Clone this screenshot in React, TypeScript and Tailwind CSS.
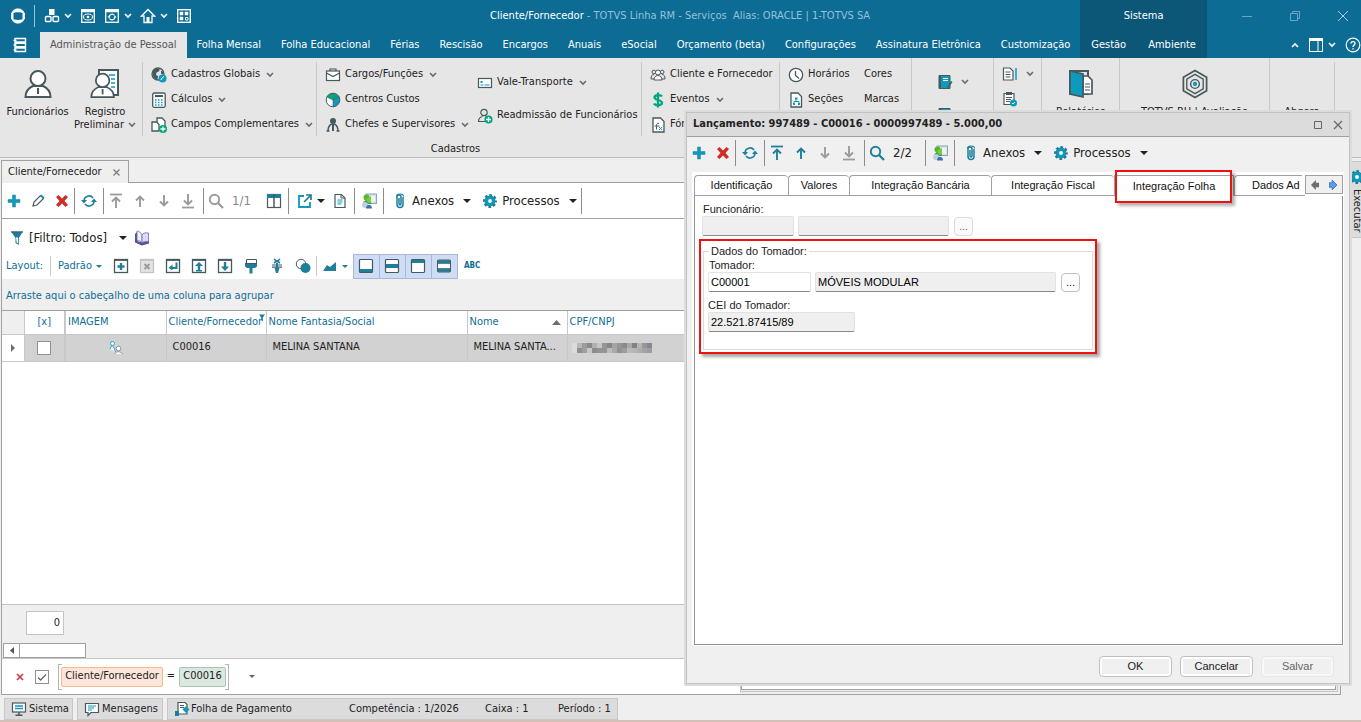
import type { ReactNode } from 'react';

type IconProps = { size?: number; className?: string; children: ReactNode };

// every small glyph is drawn on a 16x16 grid
function Icon({ size = 16, className = '', children }: IconProps) {
  return (
    <svg width={size} height={size} viewBox="0 0 16 16" fill="none" className={`shrink-0 ${className}`} aria-hidden="true">
      {children}
    </svg>
  );
}

const DARK = '#48595e';
const BLUE = '#0c9abe';
const TEAL = '#1d7f9c';
const GREEN = '#00a77e';
const GRAY = '#9b9b9b';

const Chevron = ({ color = '#6a6a6a' }: { color?: string }) => (
  <svg width="8" height="6" viewBox="0 0 8 6" fill="none" className="shrink-0" aria-hidden="true">
    <path d="M1 1l3 3 3-3" stroke={color} strokeWidth="1.6" />
  </svg>
);

const Caret = ({ color = '#222' }: { color?: string }) => (
  <svg width="8" height="4" viewBox="0 0 8 4" className="shrink-0" aria-hidden="true">
    <path d="M0 0h8L4 4z" fill={color} />
  </svg>
);

const SmallCaret = ({ color = TEAL }: { color?: string }) => (
  <svg width="6" height="3" viewBox="0 0 6 3" className="shrink-0" aria-hidden="true">
    <path d="M0 0h6L3 3z" fill={color} />
  </svg>
);

/* ---------- toolbar icons ---------- */

const PlusIcon = () => (
  <Icon><path d="M6.500 2h3v4.500H14v3H9.500V14h-3V9.500H2v-3h4.500z" fill={BLUE} stroke={TEAL} strokeWidth=".5" /></Icon>
);
const PencilIcon = () => (
  <Icon><path d="M3 13l1-4 6.500-6.500 3 3L7 12z" stroke={DARK} strokeWidth="1.2" /><path d="M10 2.500l1.500-1 3 3-1.200 1.300z" fill={BLUE} /></Icon>
);
const DeleteIcon = () => (
  <Icon><path d="M2 4l2.500-2L8 5.500 11.500 2 14 4l-3.500 4 3.500 4-2.500 2L8 10.500 4.500 14 2 12l3.500-4z" fill="#cc2f28" /></Icon>
);
const RefreshIcon = () => (
  <Icon>
    <path d="M3 7.500a5 5 0 019-2.500M13 8.500a5 5 0 01-9 2.500" stroke={TEAL} strokeWidth="1.600" />
    <path d="M0 7h6l-3 3.500zM10 9h6l-3-3.500z" fill={TEAL} />
  </Icon>
);
const ArrowIcon = ({ dir, bar = false, color }: { dir: 'up' | 'down'; bar?: boolean; color: string }) => (
  <Icon className={dir === 'down' ? 'rotate-180' : ''}>
    {bar && <path d="M2 1.500h12" stroke={color} strokeWidth="1.800" />}
    <path d={bar ? 'M8 15V5M4 8.500l4-4 4 4' : 'M8 14V4M4 7.500l4-4 4 4'} stroke={color} strokeWidth="1.900" />
  </Icon>
);
const SearchIcon = ({ color }: { color: string }) => (
  <Icon><circle cx="6.500" cy="6.500" r="4.700" stroke={color} strokeWidth="1.900" /><path d="M10 10l5 5" stroke={color} strokeWidth="2.300" /></Icon>
);
const ColumnsIcon = () => (
  <Icon><rect x="1.500" y="1.500" width="13" height="13" stroke={DARK} strokeWidth="1.200" /><path d="M1 1h14v4H1z" fill={TEAL} /><path d="M8 1v14" stroke={DARK} strokeWidth="1.500" /></Icon>
);
const ExportIcon = () => (
  <Icon><path d="M7 3H2v11h11V9" stroke={BLUE} strokeWidth="1.800" /><path d="M9 2h5v5M14 2L7 9" stroke={TEAL} strokeWidth="1.700" /></Icon>
);
const DocIcon = () => (
  <Icon><path d="M3 1.500h6.500L13 5v9.500H3z" fill="#fff" stroke={DARK} strokeWidth="1.200" /><path d="M9 1.500V5h4" stroke={DARK} /><path d="M5.500 7h5M5.500 9h5M5.500 11h4" stroke={BLUE} /></Icon>
);
const PeopleScreenIcon = () => (
  <Icon>
    <rect x="5" y="1" width="10.500" height="9.500" fill="#cfe4f2" stroke="#8aa4c0" />
    <path d="M8 3h6v5.500H8z" fill="#f3f8dc" />
    <circle cx="5.500" cy="4.500" r="3" fill="#58b62c" />
    <path d="M2 11c0-5 8-5 8 0z" fill="#3aa12b" />
    <path d="M5 6l5-3v6l-3 1z" fill="#79c94a" />
    <circle cx="4" cy="12" r="3" fill="#bfcde0" />
    <path d="M5 15.500c0-5 6-5 6 0z" fill="#3b6fb5" />
  </Icon>
);
const ClipIcon = () => (
  <Icon><path d="M11 4v7.500a3 3 0 01-6 0V4a2 2 0 014 0v7a1 1 0 01-2 0V5" stroke={TEAL} strokeWidth="1.500" /><path d="M4.500 3.500a3.500 2.500 0 017 0" stroke={TEAL} strokeWidth="1.200" /></Icon>
);
const GearIcon = () => (
  <Icon>
    <circle cx="8" cy="8" r="5.700" stroke={TEAL} strokeWidth="2.600" strokeDasharray="2.600 1.877" strokeDashoffset="1.300" />
    <circle cx="8" cy="8" r="5" fill={BLUE} stroke={TEAL} />
    <circle cx="8" cy="8" r="1.900" fill="#fff" />
  </Icon>
);
const FunnelIcon = () => (
  <Icon><path d="M2 1.500h12L9.800 8v7L6.500 13V8z" fill={TEAL} /><path d="M7 7.500h2v5.800l-1.300-.8z" fill="#fff" /><path d="M2 2h12" stroke={DARK} /></Icon>
);
const BookIcon = () => (
  <Icon>
    <path d="M1 4l2-2v9l5 1.500 7-1.500v2.500L8 15.500l-7-3z" fill="#56548f" />
    <path d="M3 1c2 0 4 1.500 5 4v8c-1-2-3-2.500-5-2.500z" fill="#eef0ff" stroke="#6d6ab0" strokeWidth=".8" />
    <path d="M8 5c1-2 3-2.500 6.500-2v8.500c-3-.5-5.500 0-6.500 1.500z" fill="#d9dcf7" stroke="#6d6ab0" strokeWidth=".8" />
  </Icon>
);

/* ---------- layout row icons ---------- */

const Boxed = ({ disabled = false, children }: { disabled?: boolean; children: ReactNode }) => (
  <Icon>
    <rect x="1.500" y="1.500" width="13" height="13" fill={disabled ? '#e3e3e3' : '#fff'} stroke={disabled ? '#c4c4c4' : DARK} strokeWidth="1.300" />
    <path d="M1 2h14" stroke={disabled ? '#c4c4c4' : DARK} strokeWidth="1.800" />
    {children}
  </Icon>
);

const layoutIcons: { name: string; icon: ReactNode }[] = [
  { name: 'Novo layout', icon: <Boxed><path d="M8 5v7M4.500 8.500h7" stroke={TEAL} strokeWidth="2.400" /></Boxed> },
  { name: 'Excluir layout', icon: <Boxed disabled><path d="M5.500 6l5 5M10.500 6l-5 5" stroke="#9a9a9a" strokeWidth="2" /></Boxed> },
  { name: 'Restaurar layout', icon: <Boxed><path d="M11.500 4.500V10H6" stroke={TEAL} strokeWidth="2" /><path d="M7.500 6.500v6L3.500 9.800z" fill={TEAL} /></Boxed> },
  { name: 'Exportar layout', icon: <Boxed><path d="M8 13V7" stroke={TEAL} strokeWidth="2.400" /><path d="M4 8l4-4 4 4zM5 12h6v1.500H5z" fill={TEAL} /></Boxed> },
  { name: 'Importar layout', icon: <Boxed><path d="M8 4v6" stroke={TEAL} strokeWidth="2.400" /><path d="M4 8.500L8 13l4-4.500z" fill={TEAL} /></Boxed> },
  { name: 'Pincel', icon: <Icon><path d="M3.500 1.500h10v4h-10z" fill="#fff" stroke={DARK} /><path d="M2 5h12v3.500L12 10H9.500v5.500h-3V10H4L2 8.500z" fill={TEAL} /><path d="M2 5.500h12" stroke={DARK} /></Icon> },
  { name: 'Ajustar colunas', icon: <Icon><path d="M5 1l3 2.500L11 1M5 5l3-2 3 2" stroke={TEAL} strokeWidth="1.600" /><path d="M3 7h10M3 9.200h10" stroke={DARK} strokeWidth="1.200" /><path d="M8 5v5" stroke={TEAL} strokeWidth="2" /><path d="M5.500 10h5L9 15H7z" fill={TEAL} /></Icon> },
  { name: 'Formatação condicional', icon: <Icon><circle cx="6" cy="6" r="4.700" fill="#fff" stroke={DARK} /><circle cx="10.500" cy="10" r="5" fill={TEAL} /></Icon> },
];

const panels = [
  { name: 'Rodapé', icon: <Icon><rect x="1.500" y="1.500" width="13" height="13" rx="1" fill="#fff" stroke={DARK} strokeWidth="1.200" /><path d="M2 11h12v3H2z" fill={TEAL} /></Icon> },
  { name: 'Rodapé de grupo', icon: <Icon><rect x="1.500" y="1.500" width="13" height="13" rx="1" fill="#fff" stroke={DARK} strokeWidth="1.200" /><path d="M2 6h12v4H2z" fill={TEAL} /></Icon> },
  { name: 'Cabeçalho', icon: <Icon><rect x="1.500" y="1.500" width="13" height="13" rx="1" fill="#fff" stroke={DARK} strokeWidth="1.200" /><path d="M2 2h12v3H2z" fill={TEAL} /></Icon> },
  { name: 'Linhas', icon: <Icon><rect x="1.500" y="2" width="13" height="12" rx="1" fill="#fff" stroke={DARK} /><path d="M1.500 2.500h13v3h-13zM1.500 10.500h13v3h-13z" fill={TEAL} stroke={DARK} strokeWidth=".6" /></Icon> },
];

/* ---------- ribbon ---------- */

const ribbonIcons: Record<string, ReactNode> = {
  globe: <Icon><circle cx="7" cy="7" r="6" fill="#e6e6e6" stroke={DARK} strokeWidth="1.300" /><path d="M1.500 6C2 3 4.500 1 7.500 1.500L9 3 7 5 5.500 5.500 5 8l2 1-.500 3.500C3.500 12.500 1.500 9.500 1.500 6z" fill={DARK} /><path d="M10 3.500L12.500 5 12 8 10 6.500z" fill={DARK} /><circle cx="11.500" cy="11.500" r="4" fill={BLUE} /><path d="M10 13l.5-1.500L13 9.500" stroke="#fff" /></Icon>,
  calc: <Icon><rect x="1.700" y="1" width="12.500" height="14.300" rx="1.500" fill="#fff" stroke={DARK} strokeWidth="1.300" /><path d="M4 3h8v2H4z" fill={DARK} /><path d="M4 8h1.500M7 8h1.500M10 8h1.500M4 10.500h1.500M7 10.500h1.500M10 10.500h1.500M4 13h1.500M7 13h1.500M10 13h1.500" stroke={BLUE} strokeWidth="1.500" /></Icon>,
  fields: <Icon><path d="M6 5V1h5l3 3v7H9" fill="#fff" stroke={DARK} strokeWidth="1.300" /><path d="M1 5h4.500L8 7.500V14H1z" fill="#fff" stroke={DARK} strokeWidth="1.300" /><circle cx="12" cy="12" r="4" fill={GREEN} /><path d="M12 9.500v5M9.500 12h5" stroke="#fff" strokeWidth="1.300" /></Icon>,
  bag: <Icon><path d="M5 4V2h6v2" stroke={DARK} strokeWidth="1.200" /><rect x="1.500" y="4" width="13" height="9.500" fill="#fff" stroke={DARK} strokeWidth="1.200" /><path d="M1.500 6L8 9.500 14.500 6" stroke={DARK} strokeWidth="1.200" /></Icon>,
  pie: <Icon><circle cx="8" cy="8" r="6.800" fill="#fff" stroke={DARK} /><path d="M8 8L1.800 5C4 .5 12 .5 14.200 5z" fill={GREEN} stroke={DARK} strokeWidth=".6" /><path d="M8 8l6.200-3c1.500 4-1 9-6.200 9.800z" fill={BLUE} stroke={DARK} strokeWidth=".6" /></Icon>,
  chief: <Icon><circle cx="8" cy="4" r="3" fill={DARK} /><path d="M7 7h2v7H7z" fill={DARK} /><path d="M7 7c-3 1-4 4-4 7M9 7c3 1 4 4 4 7M1.500 14h3M11.500 14h3" stroke={DARK} strokeWidth="1.500" /></Icon>,
  card: <Icon><rect x="1.500" y="3.500" width="13" height="9" fill="#fff" stroke={DARK} strokeWidth="1.200" /><path d="M3.500 6h2v2h-2z" fill={BLUE} /><path d="M3.500 10h3M7.500 10h5" stroke={BLUE} /></Icon>,
  personAdd: <Icon><circle cx="7" cy="4.500" r="3.200" stroke={DARK} strokeWidth="1.200" /><path d="M8 13.500H1.500c0-3 2-4.500 4-5M8.500 8.500l2 .5" stroke={DARK} strokeWidth="1.200" /><circle cx="11.500" cy="11.500" r="4" fill={GREEN} /><path d="M11.500 9v5M9 11.500h5" stroke="#fff" strokeWidth="1.300" /></Icon>,
  people: <Icon><circle cx="3.800" cy="5" r="1.800" stroke={DARK} /><circle cx="12.200" cy="5" r="1.800" stroke={DARK} /><path d="M4 12H1c0-3 1-4.500 3-4.500M12 12h3c0-3-1-4.500-3-4.500" stroke={DARK} /><path d="M4 13c0-6 8-6 8 0z" fill="#fff" stroke={DARK} /><circle cx="8" cy="5.500" r="2.500" fill="#fff" stroke={DARK} /></Icon>,
  money: <Icon><path d="M12 4.500C11 2.800 4.500 2.500 4.500 5.500S12 7.500 12 10.800 5 13.500 4 11.500M8 .5v15" stroke={GREEN} strokeWidth="2.300" /></Icon>,
  formula: <Icon><path d="M3 1h7.500L14 4.500V15H3z" fill="#fff" stroke={DARK} strokeWidth="1.300" /><path d="M9 6.500c-3-1-2.500 2-2.500 6M4.500 9h5" stroke={DARK} /><path d="M9 10l3 3M12 10l-3 3" stroke={BLUE} /></Icon>,
  clock: <Icon><circle cx="8" cy="8" r="6.700" fill="#fff" stroke={DARK} strokeWidth="1.300" /><path d="M7.500 4v4.500l3.500 3" stroke={DARK} strokeWidth="1.300" /></Icon>,
  section: <Icon><path d="M3 1h7L13.500 4.500V15H3z" fill="#fff" stroke={DARK} strokeWidth="1.300" /><path d="M7 5.500h2.500v2H7zM5 11h2v2H5zM10 11h2v2h-2z" fill={BLUE} /><path d="M8 7v2.500M6 11V9.500h5V11" stroke={BLUE} /></Icon>,
};

function RibbonItem({ icon, label, menu = false }: { icon?: string; label: string; menu?: boolean }) {
  return (
    <button className="flex h-[25px] shrink-0 items-center gap-1 whitespace-nowrap">
      {icon && ribbonIcons[icon]}
      <span>{label}</span>
      {menu && <span className="pl-[2px]"><Chevron /></span>}
    </button>
  );
}

const Person = () => (
  <g stroke={DARK} strokeWidth="2" fill="#fff">
    <path d="M1.500 29c0-6 3-9 7.500-11h10c4.500 2 7.500 5 7.500 11z" />
    <circle cx="14" cy="10.500" r="7.500" />
    <path d="M14 20v6" />
  </g>
);

function Ribbon() {
  return (
    <section className="flex h-[100px] shrink-0 overflow-hidden border-b border-[#bdbdbd] bg-[#e6e6e6]">
      <div className="flex w-[912px] shrink-0 flex-col border-r border-[#c8c8c8] pt-1">
        <div className="flex h-[74px]">
          <div className="flex w-[143px] items-start border-r border-[#c8c8c8] pt-[6px]">
            <button className="flex w-[75px] flex-col items-center">
              <svg width="28" height="32" viewBox="0 0 28 32" aria-hidden="true"><Person /></svg>
              <span className="mt-[5px] leading-[13px]">Funcionários</span>
            </button>
            <button className="flex w-[60px] flex-col items-center">
              <svg width="32" height="32" viewBox="0 0 32 32" aria-hidden="true">
                <path d="M10 2h19v25H10z" fill="#fff" stroke={DARK} strokeWidth="2" />
                <path d="M20 7h6M22 11h4M22 15h4M22 19h4" stroke={BLUE} strokeWidth="1.500" />
                <g transform="translate(1 3) scale(.9)"><Person /></g>
              </svg>
              <span className="mt-[5px] leading-[13px]">Registro</span>
              <span className="flex items-center gap-1 leading-[13px]">Preliminar <Chevron /></span>
            </button>
          </div>
          <div className="flex w-[174px] flex-col border-r border-[#c8c8c8] pl-2">
            <RibbonItem icon="globe" label="Cadastros Globais" menu />
            <RibbonItem icon="calc" label="Cálculos" menu />
            <RibbonItem icon="fields" label="Campos Complementares" menu />
          </div>
          <div className="flex w-[325px] border-r border-[#c8c8c8] pl-2">
            <div className="flex w-[152px] flex-col">
              <RibbonItem icon="bag" label="Cargos/Funções" menu />
              <RibbonItem icon="pie" label="Centros Custos" />
              <RibbonItem icon="chief" label="Chefes e Supervisores" menu />
            </div>
            <div className="flex flex-col gap-2 pt-2">
              <RibbonItem icon="card" label="Vale-Transporte" menu />
              <RibbonItem icon="personAdd" label="Readmissão de Funcionários" />
            </div>
          </div>
          <div className="flex w-[138px] flex-col border-r border-[#c8c8c8] pl-2">
            <RibbonItem icon="people" label="Cliente e Fornecedor" />
            <RibbonItem icon="money" label="Eventos" menu />
            <RibbonItem icon="formula" label="Fór" />
          </div>
          <div className="flex pl-2">
            <div className="flex w-[76px] flex-col">
              <RibbonItem icon="clock" label="Horários" />
              <RibbonItem icon="section" label="Seções" />
            </div>
            <div className="flex flex-col">
              <RibbonItem label="Cores" />
              <RibbonItem label="Marcas" />
            </div>
          </div>
        </div>
        <span className="pt-[5px] text-center leading-[16px]">Cadastros</span>
      </div>
      <div className="flex w-[82px] shrink-0 flex-col items-center gap-[17px] border-r border-[#c8c8c8] pt-4">
        {[0, 1].map((n) => (
          <button key={n} aria-label="Relatório" className="flex items-center gap-2">
            <Icon><path d="M2 1.500h11v13H2z" fill={BLUE} stroke={DARK} /><path d="M2 1.500h2v13H2z" fill={DARK} /><path d="M6 4.500h5M6 6.500h5" stroke="#fff" /><path d="M10 14l4-7 1.500 1-4 6z" fill={DARK} /></Icon>
            <Chevron />
          </button>
        ))}
      </div>
      <div className="flex w-[48px] shrink-0 flex-col items-start gap-[9px] border-r border-[#c8c8c8] pt-2 pl-2">
        <button aria-label="Documentos" className="flex items-center gap-2">
          <Icon><path d="M1.500 2h6.500l3 3v9H1.500z" fill="#fff" stroke={DARK} strokeWidth="1.200" /><path d="M3.500 6h5M3.500 8.500h5M3.500 11h5" stroke={DARK} /><path d="M14 2v12" stroke={BLUE} strokeWidth="1.500" /></Icon>
          <Chevron />
        </button>
        <button aria-label="Tarefas">
          <Icon><path d="M2 2.500h10v11H2z" fill="#fff" stroke={DARK} strokeWidth="1.200" /><path d="M4 1h6v3H4z" fill={DARK} /><path d="M4 6.500h6M4 8.500h5M4 10.500h4" stroke={DARK} /><circle cx="11.500" cy="12" r="3.500" fill={BLUE} /><path d="M10 12l1 1 2-2" stroke="#fff" /></Icon>
        </button>
      </div>
      <button className="flex w-[78px] shrink-0 flex-col items-center border-r border-[#c8c8c8] pt-[11px]">
        <svg width="26" height="30" viewBox="0 0 26 30" aria-hidden="true">
          <path d="M2 2h18v23H2z" fill="#e6e6e6" stroke={DARK} strokeWidth="2" />
          <path d="M15 7h5l4 4v14h-9z" fill="#fff" stroke={DARK} strokeWidth="1.700" />
          <path d="M17 15h5M17 18h5M17 21h5" stroke={DARK} />
          <path d="M2 2l13 3v23L2 25z" fill={BLUE} stroke={DARK} strokeWidth="1.700" />
        </svg>
        <span className="mt-[6px] leading-[14px]">Relatórios</span>
      </button>
      <button className="flex w-[150px] shrink-0 flex-col items-center border-r border-[#c8c8c8] pt-[11px]">
        <svg width="28" height="30" viewBox="0 0 28 31" fill="none" stroke={DARK} aria-hidden="true">
          <path d="M14 1.500l12 7v14l-12 7-12-7v-14z" strokeWidth="1.800" />
          <path d="M14 5.500l8.500 5v10L14 25.500l-8.500-5v-10z" strokeWidth="1.400" />
          <circle cx="14" cy="15.500" r="4.500" strokeWidth="1.500" />
          <circle cx="14" cy="15.500" r="2.200" fill={BLUE} stroke="none" />
        </svg>
        <span className="mt-[6px] leading-[14px]">TOTVS RH | Avaliação</span>
      </button>
      <button className="mt-1 flex h-[74px] w-[65px] shrink-0 items-start justify-center border-r border-[#c8c8c8] pt-[43px] leading-[14px]">Ahgora</button>
    </section>
  );
}

/* ---------- header ---------- */

const tabs = ['Administração de Pessoal', 'Folha Mensal', 'Folha Educacional', 'Férias', 'Rescisão', 'Encargos', 'Anuais', 'eSocial', 'Orçamento (beta)', 'Configurações', 'Assinatura Eletrônica', 'Customização'];

function Header() {
  return (
    <header className="flex h-[58px] shrink-0 overflow-hidden bg-[#0c6c94] text-white">
      <div className="flex shrink-0 flex-col">
        <div className="flex h-8 items-center">
          <div className="flex w-[280px] items-center pl-[10px]">
            <Icon><path d="M1 6C2 2.500 5 .5 8 .5S14 2.500 15 6C11 3.500 5 3.500 1 6zM1 10c1 3.500 4 5.500 7 5.500s6-2 7-5.500c-4 2.500-10 2.500-14 0z" fill="#fff" /><path d="M2.300 5v6M13.700 5v6" stroke="#fff" strokeWidth="2.400" /></Icon>
            <span className="mr-[9px] ml-2 h-[22px] w-px bg-white/60" />
            <div className="flex items-center gap-2">
              <button aria-label="Módulos" className="flex items-center gap-1">
                <Icon><path d="M5 1h5.500v6H5z" fill="#fff" /><rect x="1.500" y="8.500" width="5.500" height="5" rx="1" stroke="#fff" strokeWidth="1.400" /><rect x="9" y="8.500" width="5.500" height="5" rx="1" stroke="#fff" strokeWidth="1.400" /></Icon>
                <Chevron color="#fff" />
              </button>
              <button aria-label="Visualizar">
                <Icon><rect x="1.700" y="1.700" width="12.600" height="12.600" stroke="#fff" strokeWidth="1.300" /><path d="M1 3h14" stroke="#fff" strokeWidth="2.500" /><ellipse cx="8" cy="9" rx="4.500" ry="3" stroke="#fff" /><circle cx="8" cy="9" r="1.300" fill="#fff" /></Icon>
              </button>
              <button aria-label="Atualizar" className="flex items-center gap-1">
                <Icon><rect x="1.700" y="1.700" width="12.600" height="12.600" stroke="#fff" strokeWidth="1.300" /><path d="M1 3h14" stroke="#fff" strokeWidth="2.500" /><path d="M5 9a3 3 0 015.500-1.500M11 9a3 3 0 01-5.500 1.500" stroke="#fff" strokeWidth="1.300" /><path d="M3.500 8.500h3l-1.500 2zM9.500 9.500h3L11 7.500z" fill="#fff" /></Icon>
                <Chevron color="#fff" />
              </button>
              <button aria-label="Início" className="flex items-center gap-1">
                <Icon><path d="M1.500 8L8 1.500 14.500 8H12v6.500H4V8z" stroke="#fff" strokeWidth="1.300" /><path d="M6.500 9h3v5.500h-3z" fill="#fff" /></Icon>
                <Chevron color="#fff" />
              </button>
              <button aria-label="Painel">
                <Icon><rect x="1.700" y="1.700" width="12.600" height="12.600" stroke="#fff" strokeWidth="1.400" /><path d="M4 4h3v3H4zM9 4h3v3H9zM4 9h3v3H4z" fill="#fff" stroke="#fff" strokeWidth=".5" /><path d="M9.500 9.500h2.500v2.500H9.500z" stroke="#fff" /></Icon>
              </button>
            </div>
          </div>
          <h1 className="flex-1 text-center whitespace-nowrap text-[#94c1dc]"><span className="text-white">Cliente/Fornecedor</span> - TOTVS Linha RM - Serviços&nbsp; Alias: ORACLE | 1-TOTVS SA</h1>
        </div>
        <nav className="flex h-[26px]">
          <button aria-label="Menu" className="flex w-10 items-center justify-center">
            <Icon><path d="M3 1.500h10.500v3.500H3zM3 6.300h10.500v3.500H3zM3 11h10.500v3.500H3z" stroke="#fff" strokeWidth="1.400" /><path d="M1.500 3.300h3M1.500 8h3M1.500 12.800h3" stroke="#fff" strokeWidth="1.300" /></Icon>
          </button>
          {tabs.map((tab, i) => (
            <a key={tab} href="#" className={`flex items-center px-[10px] whitespace-nowrap ${i === 0 ? 'bg-[#e6e6e6] text-[#555]' : ''}`}>{tab}</a>
          ))}
        </nav>
      </div>
      <div className="flex shrink-0 flex-col bg-[#0c5778]">
        <span className="flex h-8 items-center justify-center">Sistema</span>
        <nav className="flex h-[26px]">
          <a href="#" className="flex items-center px-[11px]">Gestão</a>
          <a href="#" className="flex items-center px-[11px]">Ambiente</a>
        </nav>
      </div>
      <div className="flex flex-1 flex-col items-end">
        <div className="flex h-8 items-center gap-8 pr-[10px] text-[#6ba7c0]">
          <button aria-label="Minimizar"><Icon><path d="M3 8.500h10" stroke="currentColor" /></Icon></button>
          <button aria-label="Restaurar"><Icon><path d="M3.500 5.500h7v7h-7zM5.500 5.500v-2h7v7h-2" stroke="currentColor" /></Icon></button>
          <button aria-label="Fechar"><Icon><path d="M3 3l10 10M13 3L3 13" stroke="#a8cddd" /></Icon></button>
        </div>
        <div className="flex h-[26px] items-center gap-[9px]">
          <span className="rotate-180"><Chevron color="#fff" /></span>
          <button aria-label="Painéis" className="flex items-center gap-1">
            <Icon><path d="M1.500 1.500h13v13h-13z" stroke="#fff" /><path d="M1 1h14v3H1z" fill="#fff" /><path d="M10 2v12" stroke="#fff" /></Icon>
            <Chevron color="#fff" />
          </button>
          <button aria-label="Ajuda">
            <Icon><circle cx="8" cy="8" r="6.800" stroke="#fff" strokeWidth="1.200" /><path d="M6 6.500C6 4 10 4 10 6.500 10 8 8 8 8 10M8 11.200v1.300" stroke="#fff" strokeWidth="1.400" /></Icon>
          </button>
        </div>
      </div>
    </header>
  );
}

/* ---------- list view ---------- */

const Sep = () => <span className="h-[26px] w-px shrink-0 bg-[#8c8c8c]" />;

function Tool({ label, children }: { label: string; children: ReactNode }) {
  return <button aria-label={label} className="flex w-6 shrink-0 justify-center">{children}</button>;
}

function TextMenus() {
  return (
    <>
      <button className="flex items-center gap-1 pl-2 text-[13px]"><ClipIcon />Anexos<span className="pl-[5px]"><Caret /></span></button>
      <button className="flex items-center gap-1 pl-[11px] text-[13px]"><GearIcon />Processos<span className="pl-[5px]"><Caret /></span></button>
    </>
  );
}

// redacted document number
const blurCells = ['#e0dede', '#b4b0b0', '#918d92', '#77777c', '#aaa6a6', '#c4c2c2', '#8a8488', '#737378', '#9b9799', '#88858c', '#79777a', '#a19c9c', '#6e6d72', '#b3adad', '#8b868a', '#777479'];

function ListView() {
  return (
    <div className="flex w-[738px] shrink-0 flex-col bg-white">
      <div className="flex h-9 items-center border-b border-[#a0a0a0]">
        <Tool label="Incluir"><PlusIcon /></Tool>
        <Tool label="Editar"><PencilIcon /></Tool>
        <Tool label="Excluir"><DeleteIcon /></Tool>
        <Sep />
        <span className="px-[2px]"><Tool label="Atualizar"><RefreshIcon /></Tool></span>
        <Sep />
        <Tool label="Primeiro"><ArrowIcon dir="up" bar color={GRAY} /></Tool>
        <Tool label="Anterior"><ArrowIcon dir="up" color={GRAY} /></Tool>
        <Tool label="Próximo"><ArrowIcon dir="down" color={GRAY} /></Tool>
        <Tool label="Último"><ArrowIcon dir="down" bar color={GRAY} /></Tool>
        <span className="flex pl-[3px]"><Sep /></span>
        <Tool label="Localizar"><SearchIcon color={GRAY} /></Tool>
        <span className="w-[34px] pl-1 text-[13px] text-[#888]">1/1</span>
        <Tool label="Colunas"><ColumnsIcon /></Tool>
        <span className="flex pr-1 pl-[2px]"><Sep /></span>
        <Tool label="Exportar"><ExportIcon /></Tool>
        <span className="pr-[3px]"><Caret /></span>
        <Tool label="Documento"><DocIcon /></Tool>
        <span className="flex px-[2px]"><Sep /></span>
        <Tool label="Contatos"><PeopleScreenIcon /></Tool>
        <span className="flex pl-[2px]"><Sep /></span>
        <TextMenus />
        <span className="flex pl-1"><Sep /></span>
      </div>
      <div className="flex h-[34px] items-center gap-1 pt-1 pl-[7px] text-[13px]">
        <FunnelIcon />
        <span>[Filtro: Todos]</span>
        <span className="pr-[3px] pl-2"><Caret /></span>
        <BookIcon />
      </div>
      <div className="flex h-[26px] items-center pl-[4px] text-[#0f6e96]">
        <span>Layout:</span>
        <span className="mx-[7px] h-[20px] w-px bg-[#c8c8c8]" />
        <button className="flex w-[50px] items-center gap-1">Padrão <SmallCaret /></button>
        {layoutIcons.map(({ name, icon }) => (
          <button key={name} aria-label={name} className="flex w-[26px] justify-center">{icon}</button>
        ))}
        <span className="h-[20px] w-px bg-[#c8c8c8]" />
        <button aria-label="Gráfico" className="flex w-9 items-center justify-center gap-1">
          <Icon><path d="M1 13l4-6 3 2 6-5v9z" fill={TEAL} /></Icon>
          <SmallCaret />
        </button>
        <div className="flex border border-r-0 border-[#a9b7d2]">
          {panels.map(({ name, icon }) => (
            <button key={name} aria-label={name} className="flex h-[23px] w-[26px] items-center justify-center border-r border-[#a9b7d2] bg-[#cfdcf5]">{icon}</button>
          ))}
        </div>
        <button className="pl-[6px] text-[8px] font-bold">ABC</button>
      </div>
      <div className="flex h-8 items-center border-b border-[#a0a0a0] bg-[#efefef] pt-[3px] pl-1 text-[#0f6e96]">Arraste aqui o cabeçalho de uma coluna para agrupar</div>
      <table className="w-full table-fixed border-collapse text-left">
        <colgroup>
          <col className="w-[22px]" />
          <col className="w-[41px]" />
          <col className="w-[101px]" />
          <col className="w-[100px]" />
          <col className="w-[201px]" />
          <col className="w-[100px]" />
          <col />
        </colgroup>
        <thead>
          <tr className="h-[23px] text-[#0f6e96]">
            <th className="border-r border-b border-[#c8c8c8] bg-[#efefef]" />
            <th className="border-r-2 border-b border-[#c8c8c8] text-center font-normal">[x]</th>
            <th className="border-r border-b border-[#c8c8c8] pl-[2px] font-normal">IMAGEM</th>
            <th className="border-r border-b border-[#c8c8c8] pl-[2px] font-normal">
              <span className="flex items-start">Cliente/Fornecedor<svg width="6" height="8" viewBox="0 0 7 8" className="-ml-[3px] shrink-0" aria-hidden="true"><path d="M0 0h7L4.500 3.500V8L2.500 6.500v-3z" fill={TEAL} /></svg></span>
            </th>
            <th className="border-r border-b border-[#c8c8c8] pl-[2px] font-normal">Nome Fantasia/Social</th>
            <th className="border-r border-b border-[#c8c8c8] px-[2px] font-normal">
              <span className="flex items-center justify-between pr-1">Nome<svg width="9" height="5" viewBox="0 0 9 5" aria-hidden="true"><path d="M0 5h9L4.500 0z" fill="#6e6e6e" /></svg></span>
            </th>
            <th className="border-b border-[#c8c8c8] pl-[2px] font-normal">CPF/CNPJ</th>
          </tr>
        </thead>
        <tbody>
          <tr className="h-[27px] bg-[#d2d2d2] text-[#222]">
            <td className="border-r border-b border-[#c8c8c8] bg-white">
              <svg width="4" height="8" viewBox="0 0 4 8" className="mx-auto" aria-hidden="true"><path d="M0 0l4 4-4 4z" fill="#6e6e6e" /></svg>
            </td>
            <td className="border-r-2 border-b border-[#c8c8c8] text-center">
              <input type="checkbox" aria-label="Selecionar C00016" className="mx-auto block size-[14px] appearance-none border border-[#909090] bg-white" />
            </td>
            <td className="border-r border-b border-[#c8c8c8]">
              <Icon className="mx-auto"><g fill="#fff" stroke="#2aa5d2"><path d="M2 9l2-4 2 3 1.500 4" /><circle cx="4.500" cy="3.500" r="2" /></g><g fill="#fff" stroke="#8794a0"><circle cx="10.500" cy="8.500" r="2.300" /><path d="M7 14c.5-3 6-3 7.500 0" /></g></Icon>
            </td>
            <td className="border-r border-b border-[#c8c8c8] pl-[6px]">C00016</td>
            <td className="border-r border-b border-[#c8c8c8] pl-[6px]">MELINA SANTANA</td>
            <td className="border-r border-b border-[#c8c8c8] pl-[6px]">MELINA SANTA...</td>
            <td className="border-b border-[#c8c8c8] pl-1">
              <svg width="80" height="10" viewBox="0 0 80 10" aria-label="CPF oculto">
                {blurCells.map((fill, i) => (
                  <g key={i}>
                    <rect x={i * 5} y="0" width="5" height="5" fill={fill} opacity=".8" />
                    <rect x={i * 5} y="5" width="5" height="5" fill={blurCells[(i * 7) % 16]} opacity=".7" />
                  </g>
                ))}
              </svg>
            </td>
          </tr>
        </tbody>
      </table>
      <div className="flex-1" />
      <div className="flex h-[54px] flex-col justify-between border-t border-[#c4c4c4] bg-[#efefef] pt-[6px]">
        <output className="ml-6 flex h-[24px] w-[38px] items-center justify-end border border-[#c4c4c4] bg-white pr-[3px]">0</output>
        <div className="ml-px flex h-[15px]">
          <button aria-label="Rolar para a esquerda" className="flex w-[17px] items-center justify-center border border-[#a0a0a0] bg-white">
            <svg width="4" height="7" viewBox="0 0 4 7" aria-hidden="true"><path d="M4 0v7L0 3.500z" fill="#555" /></svg>
          </button>
          <span className="w-[66px] border border-l-0 border-[#a0a0a0] bg-white" />
        </div>
      </div>
      <div className="flex h-9 items-center border-t border-[#c4c4c4]">
        <button aria-label="Limpar filtro" className="ml-[10px]"><Icon><path d="M5 5l6 6M11 5l-6 6" stroke="#c9384a" strokeWidth="1.600" /></Icon></button>
        <label className="relative ml-[7px] block size-[14px]">
          <input type="checkbox" defaultChecked aria-label="Filtro ativo" className="block size-[14px] appearance-none border border-[#909090] bg-white" />
          <svg width="10" height="10" viewBox="0 0 10 10" fill="none" className="pointer-events-none absolute top-[2px] left-[2px]" aria-hidden="true"><path d="M1 5.500l2.500 2.500L9 2.500" stroke="#666" strokeWidth="1.300" /></svg>
        </label>
        <div className="ml-[9px] flex h-[26px] items-center">
          <span className="-mr-px h-full w-1 border border-r-0 border-[#b4b4b4]" />
          <button className="h-[20px] w-[102px] rounded-[2px] border border-[#f5b78f] bg-[#fce6da] text-center whitespace-nowrap">Cliente/Fornecedor</button>
          <span className="w-4 text-center">=</span>
          <button className="h-[20px] w-[47px] rounded-[2px] border border-[#a7c7b2] bg-[#dbe8df] text-center">C00016</button>
          <span className="-ml-px h-full w-1 border border-l-0 border-[#b4b4b4]" />
        </div>
        <button aria-label="Filtros recentes" className="ml-5"><SmallCaret color="#666" /></button>
      </div>
    </div>
  );
}

/* ---------- record window ---------- */

const inputClass = 'h-[20px] rounded-[2px] border border-[#e2e2e2] border-b-[#8a8a8a] px-[2px] text-black outline-none';
const buttonClass = 'h-[21px] w-[73px] rounded-[4px] border bg-[#f0f0f0]';
const dialogTabs = [
  { label: 'Identificação', width: 'w-[94px]' },
  { label: 'Valores', width: 'w-[61px]' },
  { label: 'Integração Bancária', width: 'w-[142px]' },
  { label: 'Integração Fiscal', width: 'w-[123px]' },
];

function RecordWindow() {
  return (
    <section role="dialog" aria-label="Lançamento" className="absolute top-[110px] right-[9px] bottom-[36px] left-[684px] flex border-2 border-[#dcdcdc]">
      <div className="flex min-w-0 flex-1 flex-col border border-[#c2c2c2] bg-[#f0f0f0]">
        <div className="flex h-[24px] shrink-0 items-center border-b border-[#a0a0a0] bg-[#dcdcdc] pr-[3px] pl-[6px]">
          <h2 className="flex-1 font-bold text-[#222]">Lançamento: 997489 - C00016 - 0000997489 - 5.000,00</h2>
          <div className="flex gap-1">
            <button aria-label="Maximizar"><Icon><path d="M4.500 4.500h7v7h-7z" stroke="#666" /></Icon></button>
            <button aria-label="Fechar"><Icon><path d="M4 4l8 8M12 4l-8 8" stroke="#666" strokeWidth="1.200" /></Icon></button>
          </div>
        </div>
        <div className="flex h-8 shrink-0 items-center">
          <Tool label="Incluir"><PlusIcon /></Tool>
          <Tool label="Excluir"><DeleteIcon /></Tool>
          <Sep />
          <span className="px-[2px]"><Tool label="Atualizar"><RefreshIcon /></Tool></span>
          <Sep />
          <Tool label="Primeiro"><ArrowIcon dir="up" bar color={TEAL} /></Tool>
          <Tool label="Anterior"><ArrowIcon dir="up" color={TEAL} /></Tool>
          <Tool label="Próximo"><ArrowIcon dir="down" color={GRAY} /></Tool>
          <Tool label="Último"><ArrowIcon dir="down" bar color={GRAY} /></Tool>
          <span className="flex pl-[3px]"><Sep /></span>
          <Tool label="Localizar"><SearchIcon color={TEAL} /></Tool>
          <span className="w-9 pl-1 text-[13px]">2/2</span>
          <span className="flex pr-[2px]"><Sep /></span>
          <Tool label="Contatos"><PeopleScreenIcon /></Tool>
          <span className="flex pl-[2px]"><Sep /></span>
          <TextMenus />
        </div>
        <div className="mt-[3px] mr-[5px] ml-[5px] flex min-h-0 flex-1 flex-col bg-white pt-[3px] pr-px pb-px pl-[2px] [font-family:'Liberation_Sans',Arial,sans-serif]">
          <div role="tablist" className="flex h-[21px] shrink-0 text-[#111]">
            {dialogTabs.map(({ label, width }) => (
              <button key={label} role="tab" aria-selected="false" className={`${width} shrink-0 rounded-t-[4px] border border-r-0 border-[#a0a0a0]`}>{label}</button>
            ))}
            <div className="relative w-[120px] shrink-0">
              <button role="tab" aria-selected="true" className="h-full w-full border-x border-t border-[#a0a0a0]">Integração Folha</button>
              <span className="pointer-events-none absolute -top-[5px] right-[2px] -bottom-[7px] left-px border-2 border-[#f01010] shadow-[3px_3px_3px_rgba(0,0,0,0.3)]" />
            </div>
            <div className="min-w-0 flex-1 overflow-hidden border-b border-[#a0a0a0]">
              <button role="tab" aria-selected="false" className="block h-full w-[68px] rounded-tl-[4px] border-t border-l border-[#a0a0a0] pl-[17px] text-left whitespace-nowrap">Dados Ad</button>
            </div>
            <div className="flex h-[19px] w-[38px] shrink-0 border border-[#a0a0a0] bg-[#f0f0f0]">
              <button aria-label="Abas anteriores" className="flex flex-1 items-center justify-center"><svg width="8" height="10" viewBox="0 0 9 11" aria-hidden="true"><path d="M5.500 0v3H9v5H5.500v3L0 5.500z" fill="#6e6e6e" /></svg></button>
              <button aria-label="Próximas abas" className="flex flex-1 items-center justify-center"><svg width="8" height="10" viewBox="0 0 9 11" aria-hidden="true"><path d="M3.500 0v3H0v5h3.500v3L9 5.500z" fill="#5b9bf0" stroke="#2c62b5" strokeWidth=".8" /></svg></button>
            </div>
          </div>
          <form className="flex-1 border border-t-0 border-[#8f8f8f] pt-[6px] pl-[7px]" onSubmit={(e) => e.preventDefault()}>
            <label htmlFor="funcionario" className="block pl-px leading-[14px]">Funcionário:</label>
            <div className="flex items-center">
              <input id="funcionario" disabled className={`${inputClass} w-[92px] bg-[#efefef]`} />
              <input aria-label="Nome do funcionário" disabled className={`${inputClass} ml-1 w-[151px] bg-[#efefef]`} />
              <button type="button" disabled className="ml-[5px] h-[19px] w-[19px] rounded-[4px] border border-[#dcdcdc] bg-[#fafafa] text-[#777]">...</button>
            </div>
            <div className="relative mt-[3px] ml-[-3px] h-[115px] w-[398px] pt-[5px] pl-1">
              <span className="pointer-events-none absolute inset-0 border-2 border-[#f01010] shadow-[3px_3px_3px_rgba(0,0,0,0.35)]" />
              <fieldset className="h-[106px] w-[390px] border border-[#dcdcdc] pl-1">
                <legend className="ml-px px-[2px] leading-[14px]">Dados do Tomador:</legend>
                <label htmlFor="tomador" className="block pl-px leading-[14px]">Tomador:</label>
                <div className="flex items-center">
                  <input id="tomador" defaultValue="C00001" className={`${inputClass} w-[103px] bg-white`} />
                  <input aria-label="Nome do tomador" readOnly value="MÓVEIS MODULAR" className={`${inputClass} ml-1 w-[241px] bg-[#efefef]`} />
                  <button type="button" className="ml-[5px] h-[19px] w-[19px] rounded-[4px] border border-[#c0c0c0] bg-[#fdfdfd]">...</button>
                </div>
                <label htmlFor="cei" className="mt-[6px] block leading-[14px]">CEI do Tomador:</label>
                <input id="cei" readOnly value="22.521.87415/89" className={`${inputClass} block w-[147px] bg-[#efefef]`} />
              </fieldset>
            </div>
          </form>
        </div>
        <div className="flex h-[37px] shrink-0 items-center justify-end gap-2 pt-[7px] pr-[15px] pb-1 [font-family:'Liberation_Sans',Arial,sans-serif]">
          <button className={`${buttonClass} border-[#c0c0c0] shadow-[inset_0_0_0_2px_#fff]`}>OK</button>
          <button className={`${buttonClass} border-[#c0c0c0] shadow-[inset_0_0_0_2px_#fff]`}>Cancelar</button>
          <button disabled className={`${buttonClass} border-[#e6e6e6] text-[#666] shadow-[inset_0_0_0_2px_#f8f8f8]`}>Salvar</button>
        </div>
      </div>
    </section>
  );
}

function StatusBar() {
  return (
    <footer className="flex h-[27px] shrink-0 gap-1 border-b-2 border-[#d5c0b8] pt-[3px] pl-1">
      <button className="flex h-[22px] w-[69px] items-center gap-[2px] border border-[#c8c8c8] bg-[#dcdcdc] pl-[6px]">
        <Icon><rect x="1.500" y="2" width="13" height="9" fill="#fff" stroke={DARK} strokeWidth="1.200" /><path d="M4 5h8M4 7.500h8" stroke={BLUE} strokeWidth="1.500" /><path d="M8 11v3M4.500 14.300h7" stroke={DARK} strokeWidth="1.500" /></Icon>
        Sistema
      </button>
      <button className="flex h-[22px] w-[86px] items-center gap-[2px] border border-[#c8c8c8] bg-[#dcdcdc] pl-[6px]">
        <Icon><path d="M1.500 2.500h13v9H7l-3 3v-3H1.500z" fill="#fff" stroke={DARK} strokeWidth="1.200" /><path d="M4 5h8M4 7h6M4 9h4" stroke={BLUE} /></Icon>
        Mensagens
      </button>
      <div className="flex h-[22px] w-[451px] items-center border border-[#c8c8c8] bg-[#dcdcdc] pl-[6px]">
        <Icon><path d="M4 1.500h7l2 2V13H4z" fill="#fff" stroke={DARK} strokeWidth="1.200" /><path d="M6 4.500h4M6 6.500h4" stroke={DARK} /><path d="M12 5l3.500 3.500L12 12 8.500 8.500z" fill={BLUE} /><path d="M1 10h4v5H1z" fill={TEAL} /></Icon>
        <span className="w-[159px] pl-[1px]">Folha de Pagamento</span>
        <span className="w-[136px]">Competência : 1/2026</span>
        <span className="w-[73px]">Caixa : 1</span>
        <span>Período : 1</span>
      </div>
    </footer>
  );
}

export default function App() {
  return (
    <div className="relative flex h-screen min-h-[600px] flex-col overflow-hidden bg-[#efefef] text-[11px] text-[#222] [font-family:'DejaVu_Sans_Condensed','Noto_Sans',sans-serif]">
      <Header />
      <Ribbon />
      <div className="flex min-h-0 flex-1">
        <main className="flex min-w-0 flex-1 flex-col pl-px">
          <div className="flex h-[25px] shrink-0 items-end border-b border-[#a0a0a0]">
            <div className="-mb-px flex h-[23px] w-[128px] items-center justify-between border border-b-0 border-[#a0a0a0] bg-[#efefef] pr-2 pl-[6px]">
              Cliente/Fornecedor
              <button aria-label="Fechar aba"><svg width="7" height="7" viewBox="0 0 7 7" aria-hidden="true"><path d="M.5.5l6 6M6.500.5l-6 6" stroke="#777" strokeWidth="1.200" /></svg></button>
            </div>
          </div>
          <div className="flex min-h-0 flex-1 border-b border-l border-[#a0a0a0]">
            <ListView />
            <div className="flex flex-1 border-r border-[#a0a0a0] pr-[2px] pb-[2px]">
              <div className="flex flex-1 border border-[#c4c4c4] pr-px pb-px">
                <div className="flex-1 border border-[#a0a0a0] bg-white" />
              </div>
            </div>
          </div>
        </main>
        <aside className="w-5 pt-[3px]">
          <button className="ml-2 flex h-[77px] w-[14px] flex-col items-center gap-1 border border-r-0 border-[#c8c8c8] bg-[#dcdcdc] pt-[7px]">
            <GearIcon />
            <span className="leading-[12px] [writing-mode:vertical-rl]">Executar</span>
          </button>
        </aside>
      </div>
      <StatusBar />
      <RecordWindow />
    </div>
  );
}
